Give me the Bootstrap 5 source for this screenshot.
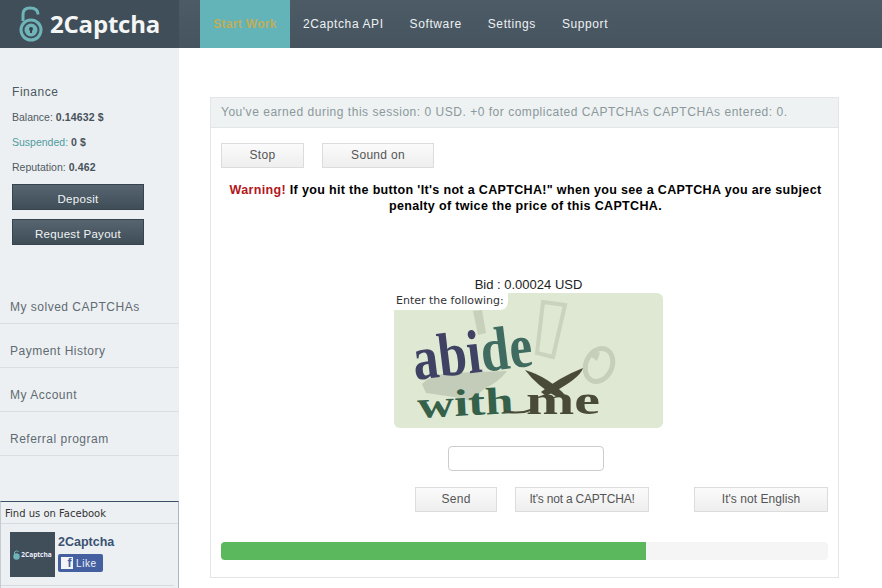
<!DOCTYPE html>
<html lang="en"><head><meta charset="utf-8"><title>2Captcha</title>
<link rel="stylesheet" href="https://cdn.jsdelivr.net/npm/bootstrap@5.3.0/dist/css/bootstrap.min.css">
<style>
html,body{height:588px;overflow:hidden}
body{font-family:"Liberation Sans",Arial,sans-serif;background:#fff;color:#000}
.topbar{height:48px;padding:0;background:linear-gradient(#4d5b66,#46545f);flex-wrap:nowrap;justify-content:flex-start}
.brandbox{width:179px;height:48px;background:#3f4e59;display:flex;align-items:center;padding:0 0 0 18px;margin:0;gap:6px}
.brandname{font-family:"Open Sans",sans-serif;font-weight:700;font-size:24px;color:#f4f6f6;letter-spacing:-.2px}
.topnav{margin-left:21px;flex-direction:row}
.topnav .nav-link{height:48px;line-height:48px;padding:0 13px;color:#eef1f2;font-size:12px;letter-spacing:.6px;white-space:nowrap}
.topnav .nav-link.active{background:#63b4b9;color:#bfae5c;width:90px;padding:0;text-align:center;font-weight:700;letter-spacing:.3px}
.shell{display:flex;height:540px}
.sidebar{width:179px;flex:none;background:#edf0f2;display:flex;flex-direction:column;color:#4b5860}
.finance{padding:36px 12px 0;height:232px}
.fin-title{font-size:12px;letter-spacing:.55px;line-height:16px;margin-bottom:9px}
.fin-row{font-size:10.5px;line-height:16px;margin-bottom:9px;color:#4d5a62}
.fin-row b{color:#46525a;letter-spacing:.15px}
.fin-row .susp{color:#4f9ba0}
.dark-btn{display:block;width:132px;height:26px;padding:0;line-height:29px;font-size:11.5px;letter-spacing:.3px;color:#f1f3f4;background:linear-gradient(#566570,#3f4d57);border:1px solid #37444d;border-radius:0;margin-bottom:9px}
.dark-btn:hover{color:#fff}
.side-list{background:transparent;border-radius:0}
.side-list .list-group-item{background:transparent;height:44px;line-height:30px;padding:12px 10px 0;border:0;border-bottom:1px solid #d9dee1;border-radius:0;color:#5f6b72;font-size:12px;letter-spacing:.5px}
.fbbox{margin-top:45px;height:87px;border:1px solid #aeb6bf;border-top:1px solid #3b5068;border-bottom:0;border-left-color:#c5cbd1}
.fbhead{height:22px;line-height:23px;padding-left:4px;font-family:"DejaVu Sans",sans-serif;font-size:10px;color:#333;border-bottom:1px solid #d6dbe0}
.fbbody{display:flex;gap:3px;padding:8px 9px;height:62px;border-bottom:1px solid #d6dbe0;margin-right:4px}
.fbthumb{width:45px;height:45px;background:#3f4e59;display:flex;align-items:center;justify-content:center;gap:1px;flex:none}
.fbthumb span{font-family:"Open Sans",sans-serif;color:#eef;font-size:6.5px;font-weight:700}
.fbname{font-size:12.5px;font-weight:700;color:#3a5273;line-height:18px;padding-top:1px}
.fblike{margin-top:3px;width:45px;height:18px;background:#4460a0;border-radius:2px;display:flex;align-items:center;gap:3px;padding-left:3px;color:#eef2f8;font-size:10px;letter-spacing:.6px}
.fblike i{width:12px;height:12px;background:#f2f4f8;color:#4460a0;font:700 12px/13px "Liberation Sans",sans-serif;text-align:right;padding-right:1px;display:block}
.mainarea{flex:1;padding:49px 44px 0 31px;min-width:0}
.session{height:481px;width:629px;border:1px solid #e2e6e8;border-radius:0;--bs-card-border-color:#e2e6e8}
.session .card-header{height:30px;line-height:29px;padding:0 10px;background:#eef2f2;border-bottom:1px solid #e2e6e8;border-radius:0;color:#8b989c;font-size:12px;letter-spacing:.52px;white-space:nowrap}
.session .card-body{padding:15px 10px 0}
.action-row{gap:18px}
.pale-btn{height:25px;padding:0;line-height:23px;font-size:12px;letter-spacing:.3px;color:#555;background:linear-gradient(#fbfbfb,#eeeeee);border:1px solid #dcdcdc;border-radius:0}
.w83{width:83px}.w112{width:112px}.w82{width:82px}.w134{width:134px}
.pale-btn.tight{letter-spacing:-.2px}.pale-btn.plain{letter-spacing:.05px}
.warn{margin:14px 0 0;text-align:center;font-weight:700;font-size:12.5px;line-height:16px;letter-spacing:.34px;padding-left:2px}
.warn em{font-style:normal;color:#b3161c}
.bid{margin-top:63px;text-align:center;font-size:13px;line-height:16px;padding-left:8px;color:#222}
.capt{display:block;margin:0 auto 0 173px;width:269px;height:135px}
.answer{display:block;width:156px;height:25px;margin:18px 0 0 227px;border:1px solid #ccc;border-radius:4px;padding:0 6px}
.answers{display:flex;margin:16px 0 0 194px}
.answers .gap1{margin-left:18px}.answers .gap2{margin-left:45px}
.pbar{height:18px;margin-top:30px;background:#f5f5f5;border-radius:4px;width:607px}
.pbar .progress-bar{background:#5cb85c}
</style></head>
<body>
<nav class="navbar topbar">
  <a class="brandbox text-decoration-none" href="#">
    <svg width="26" height="37" viewBox="0 0 26 37" aria-hidden="true"><path d="M5 15V8.500C5 4 8 2 12 2s8 1.500 8 6.500" fill="none" stroke="#6fb4b9" stroke-width="3"/><circle cx="13" cy="24" r="11.500" fill="#6fb4b9"/><circle cx="13" cy="24" r="8.500" fill="#3f4e59"/><circle cx="13" cy="24" r="6.500" fill="#6fb4b9"/><circle cx="13" cy="23" r="2" fill="#33424d"/><path d="M12 23h2v4h-2z" fill="#33424d"/></svg>
    <span class="brandname">2Captcha</span>
  </a>
  <ul class="nav topnav">
    <li class="nav-item"><a class="nav-link active" href="#">Start Work</a></li>
    <li class="nav-item"><a class="nav-link" href="#">2Captcha API</a></li>
    <li class="nav-item"><a class="nav-link" href="#">Software</a></li>
    <li class="nav-item"><a class="nav-link" href="#">Settings</a></li>
    <li class="nav-item"><a class="nav-link" href="#">Support</a></li>
  </ul>
</nav>
<div class="shell">
  <aside class="sidebar">
    <div class="finance">
      <div class="fin-title">Finance</div>
      <div class="fin-row">Balance: <b>0.14632 $</b></div>
      <div class="fin-row"><span class="susp">Suspended:</span> <b>0 $</b></div>
      <div class="fin-row">Reputation: <b>0.462</b></div>
      <a class="btn dark-btn" href="#">Deposit</a>
      <a class="btn dark-btn" href="#">Request Payout</a>
    </div>
    <div class="list-group side-list">
      <a class="list-group-item" href="#">My solved CAPTCHAs</a>
      <a class="list-group-item" href="#">Payment History</a>
      <a class="list-group-item" href="#">My Account</a>
      <a class="list-group-item" href="#">Referral program</a>
    </div>
    <div class="fbbox">
      <div class="fbhead">Find us on Facebook</div>
      <div class="fbbody">
        <div class="fbthumb"><svg width="7" height="10" viewBox="0 0 7 10" aria-hidden="true"><circle cx="3.500" cy="6.500" r="3.200" fill="#6fb4b9"/><path d="M1.500 4V2Q3.500 0 5.500 1.500" fill="none" stroke="#6fb4b9"/></svg><span>2Captcha</span></div>
        <div>
          <div class="fbname">2Captcha</div>
          <div class="fblike"><i>f</i>Like</div>
        </div>
      </div>
    </div>
  </aside>
  <main class="mainarea">
    <div class="card session">
      <div class="card-header">You've earned during this session: 0 USD. +0 for complicated CAPTCHAs CAPTCHAs entered: 0.</div>
      <div class="card-body">
        <div class="d-flex action-row">
          <button class="btn pale-btn w83" type="button">Stop</button>
          <button class="btn pale-btn w112" type="button">Sound on</button>
        </div>
        <p class="warn"><em>Warning!</em> If you hit the button 'It's not a CAPTCHA!" when you see a CAPTCHA you are subject<br>penalty of twice the price of this CAPTCHA.</p>
        <div class="bid">Bid : 0.00024 USD</div>
        <svg class="capt" viewBox="0 0 269 135" role="img" aria-label="CAPTCHA image">
          <rect width="269" height="135" rx="6" fill="#dfe8d3"/>
          <path d="M0 0H114V8Q114 17 105 17H0Z" fill="#fff"/>
          <text x="2" y="11" font-family="DejaVu Sans" font-size="11" fill="#333">Enter the following:</text>
          <path d="M149 9L171 12L159 64L143 60Z" fill="none" stroke="#c9d3bd" stroke-width="4"/>
          <ellipse cx="205" cy="72" rx="13" ry="17" transform="rotate(25 205 72)" fill="none" stroke="#c5cfb9" stroke-width="5"/>
          <path d="M198 56l8 4-3 8-7-5z" fill="#c5cfb9"/>
          <path d="M79 18L88 17L92 40L84 42Z" fill="#c6d0ba"/>
          <path d="M28 91Q36 82 55 80L113 78Q106 88 90 96L77 108L60 104L32 100Z" fill="#c3ccb8"/>
          <text x="21" y="87" transform="rotate(-7 21 87)" font-family="Liberation Serif" font-weight="700" font-size="62" fill="#3f4263" textLength="120" lengthAdjust="spacingAndGlyphs">abi<tspan fill="#3f6b60">de</tspan></text>
          <text x="24" y="125" transform="rotate(-3 24 125)" font-family="Liberation Serif" font-weight="700" font-size="38" fill="#35604a" textLength="96" lengthAdjust="spacingAndGlyphs">with</text>
          <text x="132" y="121" font-family="Liberation Serif" font-weight="700" font-size="40" fill="#4a4a38" textLength="74" lengthAdjust="spacingAndGlyphs">me</text>
          <path d="M110 118Q125 122 140 116" fill="none" stroke="#4a4a38" stroke-width="2"/>
          <path d="M131 77Q155 84 173 104L163 104Q144 94 131 77Z" fill="#4a4a38"/>
          <path d="M189 75Q186 86 152 103L147 99Q166 84 189 75Z" fill="#4a4a38"/>
        </svg>
        <input class="form-control answer" type="text" aria-label="Answer">
        <div class="answers">
          <button class="btn pale-btn w82" type="button">Send</button>
          <button class="btn pale-btn w134 gap1 tight" type="button">It's not a CAPTCHA!</button>
          <button class="btn pale-btn w134 gap2 plain" type="button">It's not English</button>
        </div>
        <div class="progress pbar"><div class="progress-bar" style="width:70%"></div></div>
      </div>
    </div>
  </main>
</div>
<script src="https://cdn.jsdelivr.net/npm/bootstrap@5.3.0/dist/js/bootstrap.bundle.min.js"></script>
</body></html>
